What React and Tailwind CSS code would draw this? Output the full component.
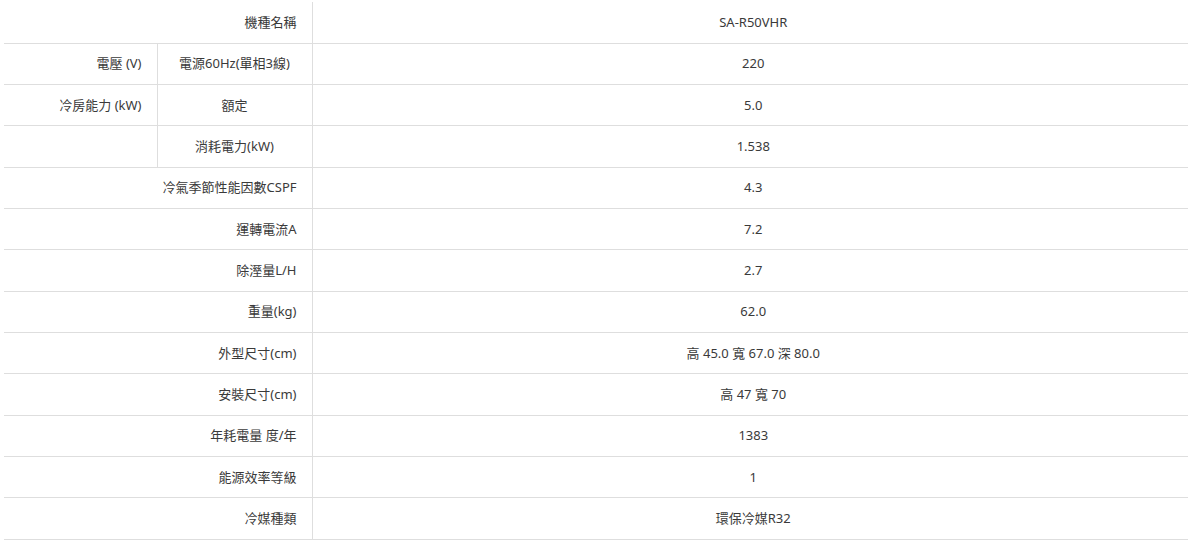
import React from "react";

// spec table rows: label spans both label columns unless split
const rows = [
  { label: "機種名稱", value: "SA-R50VHR" },
  { group: "電壓 (V)", sub: "電源60Hz(單相3線)", value: "220" },
  { group: "冷房能力 (kW)", sub: "額定", value: "5.0" },
  { group: "", sub: "消耗電力(kW)", value: "1.538" },
  { label: "冷氣季節性能因數CSPF", value: "4.3" },
  { label: "運轉電流A", value: "7.2" },
  { label: "除溼量L/H", value: "2.7" },
  { label: "重量(kg)", value: "62.0" },
  { label: "外型尺寸(cm)", value: "高 45.0 寬 67.0 深 80.0" },
  { label: "安裝尺寸(cm)", value: "高 47 寬 70" },
  { label: "年耗電量 度/年", value: "1383" },
  { label: "能源效率等級", value: "1" },
  { label: "冷媒種類", value: "環保冷媒R32" },
];

const App = () => {
  return (
    <div className="min-h-screen bg-white pt-[2px] pl-[4px]">
      <table
        className="w-full border-collapse text-[13px] text-[#3a3a3a]"
        style={{ fontFamily: '"Noto Sans", "Noto Sans CJK TC", sans-serif' }}
      >
        <colgroup>
          <col className="w-[153px]" />
          <col className="w-[155px]" />
          <col />
        </colgroup>
        <tbody>
          {rows.map((r, i) => (
            <tr key={i} className="h-[41.33px] border-b border-[#dedede]">
              {r.label !== undefined ? (
                <td colSpan={2} className="pr-[15px] text-right align-middle">
                  {r.label}
                </td>
              ) : (
                <>
                  <td className="pr-[15px] text-right align-middle">{r.group}</td>
                  <td className="border-l border-[#dedede] text-center align-middle">
                    {r.sub}
                  </td>
                </>
              )}
              <td className="border-l border-[#dedede] pl-[6px] text-center align-middle">
                {r.value}
              </td>
            </tr>
          ))}
        </tbody>
      </table>
    </div>
  );
};

export default App;
